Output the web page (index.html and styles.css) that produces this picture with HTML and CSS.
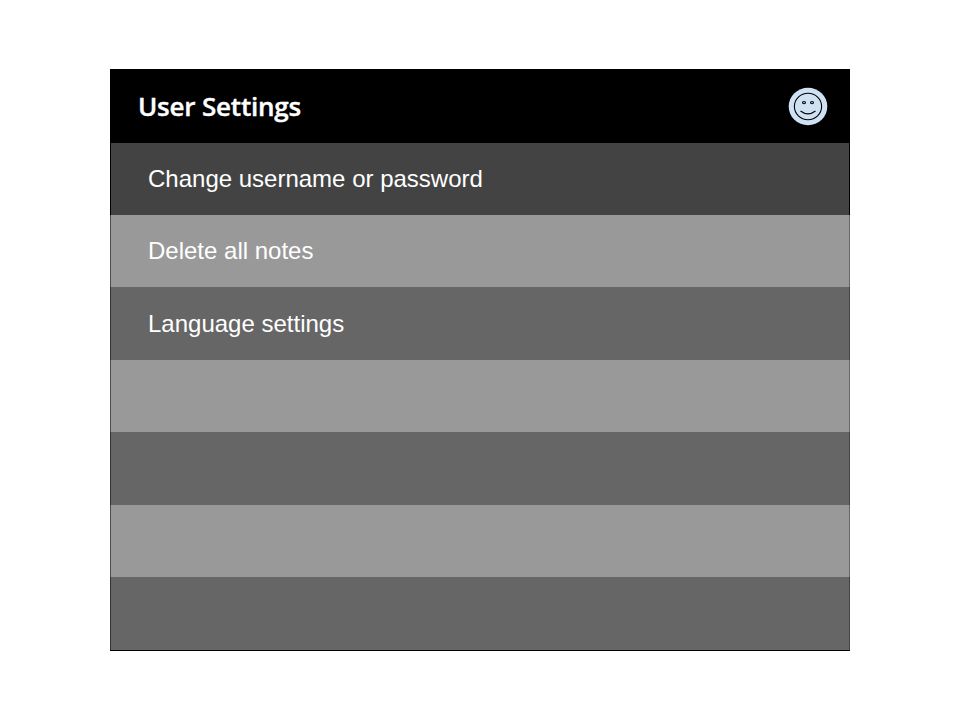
FILE: index.html
```html
<!DOCTYPE html>
<html lang="en">
<head>
<meta charset="utf-8">
<title>User Settings</title>
<link rel="stylesheet" href="styles.css">
</head>
<body>
<main class="panel">
  <header class="header">
    <h1 class="title">User Settings</h1>
    <svg class="avatar" viewBox="0 0 40 40" fill="none" stroke="#000" stroke-width="1.1">
      <ellipse cx="20" cy="19.500" rx="19.300" ry="18.700" fill="#cfe2f3" stroke="none"/>
      <ellipse cx="20" cy="19.500" rx="13.600" ry="13.200"/>
      <ellipse cx="16" cy="15.600" rx="1.500" ry="1.100"/>
      <ellipse cx="24" cy="15.600" rx="1.500" ry="1.100"/>
      <path d="M12.500 24Q20 29.700 27.500 24"/>
    </svg>
  </header>
  <ul class="list">
    <li class="row row-active">Change username or password</li>
    <li class="row">Delete all notes</li>
    <li class="row row-language">Language settings</li>
    <li class="row"></li>
    <li class="row"></li>
    <li class="row"></li>
    <li class="row"></li>
  </ul>
</main>
</body>
</html>
```

FILE: styles.css
```css
* { box-sizing: border-box; }
body { margin: 0; background: #fff; }
.panel { width: 740px; height: 582px; margin: 69px 0 0 110px; border: solid #000; border-width: 1px 0 1px 0; display: flex; flex-direction: column; font-family: "Liberation Sans", Arial, sans-serif; color: #fff; }
.header { height: 73px; background: #000; display: flex; align-items: center; justify-content: space-between; padding: 0 22px 0 28px; }
.title { margin: -2px 0 0; font: 600 26px "Open Sans", sans-serif; letter-spacing: -0.2px; -webkit-text-stroke: 0.4px #fff; }
.avatar { width: 40px; height: 40px; }
.list { list-style: none; margin: 0; padding: 0; display: grid; grid-template-rows: 72px 72px 73px 72px 73px 72px 73px; }
.row { display: flex; align-items: center; padding: 0 0 1px 37px; font-size: 24px; line-height: 28px; background: #666; border-left: 1px solid #333; border-right: 1px solid #444; }
.row:nth-child(even) { background: #999; border-left-color: #4d4d4d; border-right-color: #666; }
.row-active { background: #434343; border-color: #222 #000; }
.row-language { padding-bottom: 0; }
```
